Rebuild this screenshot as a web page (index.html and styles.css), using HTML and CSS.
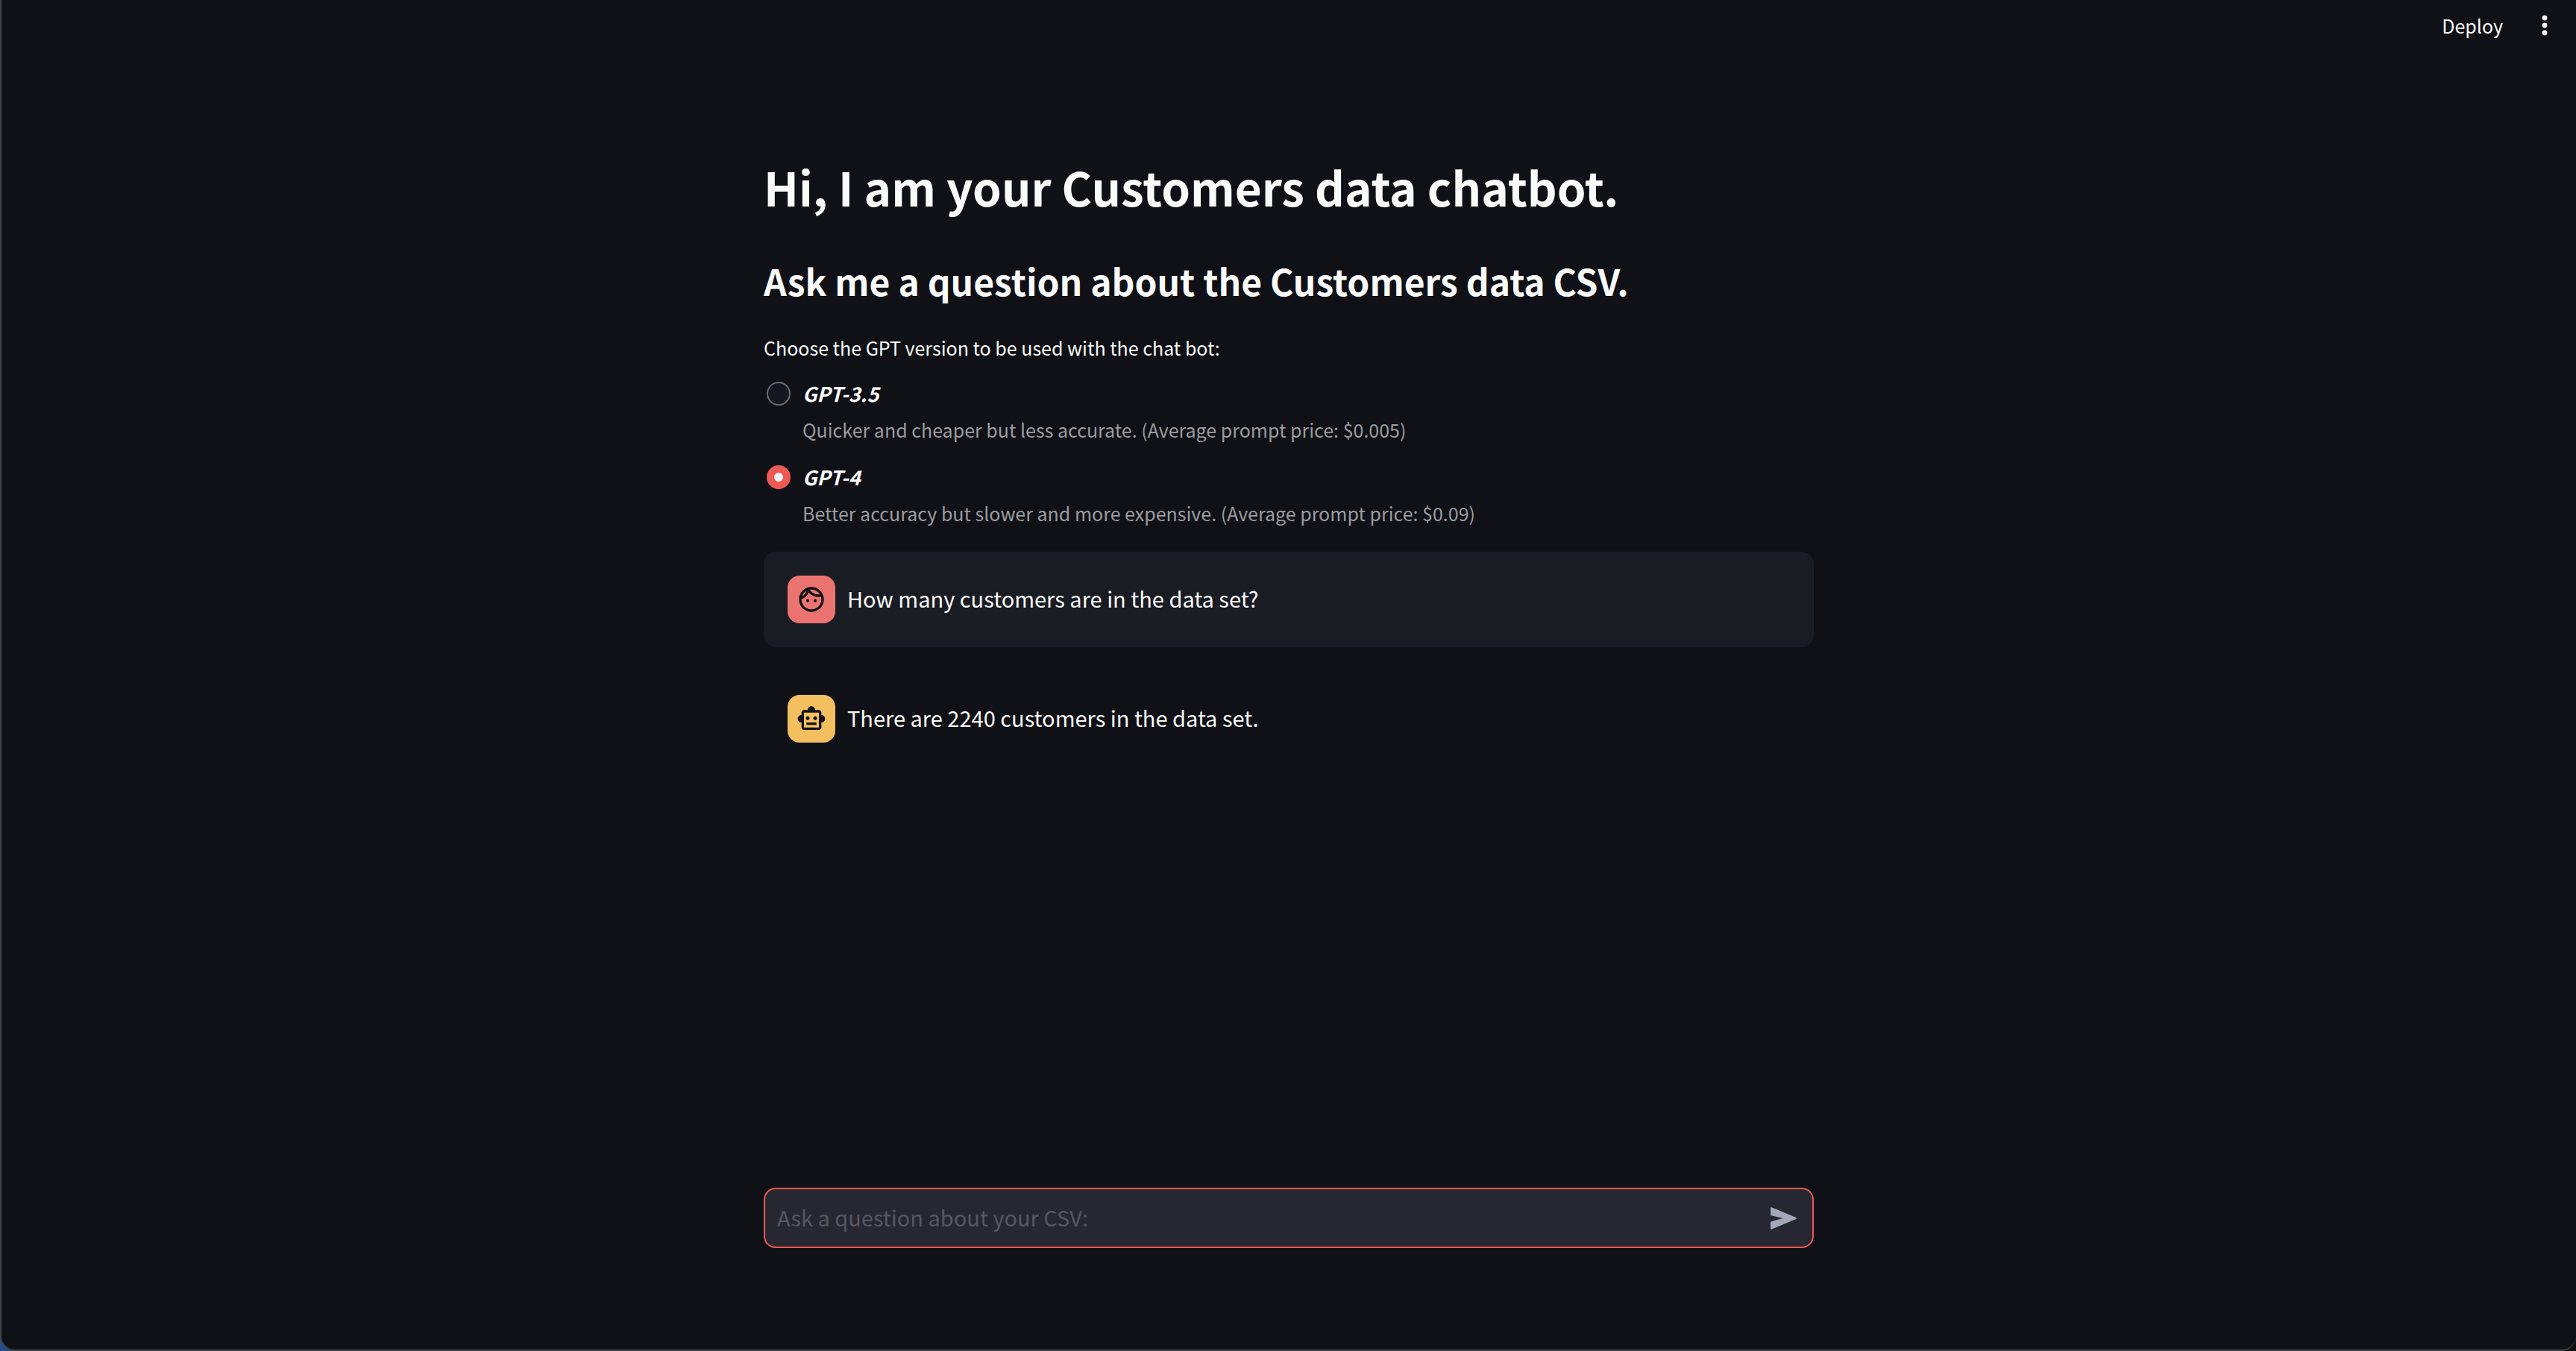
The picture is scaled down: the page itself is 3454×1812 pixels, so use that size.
FILE: index.html
```html
<!DOCTYPE html>
<html lang="en">
<head>
<meta charset="utf-8">
<title>Customers data chatbot</title>
<link rel="stylesheet" href="styles.css">
</head>
<body>
<div class="app">
  <header class="toolbar">
    <button class="deploy" type="button">Deploy</button>
    <button class="menu" type="button" aria-label="Main menu">
      <svg viewBox="0 0 8 28" width="8" height="28" fill="currentColor"><circle cx="4" cy="4" r="3.4"/><circle cx="4" cy="14" r="3.4"/><circle cx="4" cy="24" r="3.4"/></svg>
    </button>
  </header>
  <main class="content">
    <h1 class="title">Hi, I am your Customers data chatbot.</h1>
    <h2 class="subtitle">Ask me a question about the Customers data CSV.</h2>
    <fieldset class="models">
      <legend class="legend">Choose the GPT version to be used with the chat bot:</legend>
      <div class="option">
        <input class="radio" type="radio" name="model" id="gpt35" aria-describedby="gpt35-note">
        <label class="name" for="gpt35">GPT-3.5</label>
        <p class="note" id="gpt35-note">Quicker and cheaper but less accurate. (Average prompt price: $0.005)</p>
      </div>
      <div class="option">
        <input class="radio" type="radio" name="model" id="gpt4" aria-describedby="gpt4-note" checked>
        <label class="name" for="gpt4">GPT-4</label>
        <p class="note" id="gpt4-note">Better accuracy but slower and more expensive. (Average prompt price: $0.09)</p>
      </div>
    </fieldset>
    <section class="chat">
      <article class="message message-user">
        <span class="avatar avatar-user">
          <svg viewBox="0 0 24 24" width="40" height="40" fill="currentColor"><path d="M10.25 13a1.25 1.25 0 1 1-2.5 0 1.25 1.25 0 0 1 2.5 0zM15 11.75a1.25 1.25 0 1 0 0 2.5 1.25 1.25 0 0 0 0-2.5zm7 .25c0 5.52-4.48 10-10 10S2 17.52 2 12 6.48 2 12 2s10 4.48 10 10zM10.66 4.12C12.06 6.44 14.6 8 17.5 8c.46 0 .91-.05 1.34-.12C17.44 5.56 14.9 4 12 4c-.46 0-.91.05-1.34.12zM4.42 9.47a8.046 8.046 0 0 0 3.66-4.44 8.046 8.046 0 0 0-3.66 4.44zM20 12c0-.78-.12-1.53-.33-2.24-.7.15-1.42.24-2.17.24a10 10 0 0 1-7.76-3.69A10.016 10.016 0 0 1 4 11.86c.01.04 0 .09 0 .14 0 4.41 3.59 8 8 8s8-3.59 8-8z"/></svg>
        </span>
        <p class="text">How many customers are in the data set?</p>
      </article>
      <article class="message">
        <span class="avatar avatar-bot">
          <svg viewBox="0 0 24 24" width="40" height="40" fill="currentColor"><path d="M20 9V7c0-1.100-.9-2-2-2h-3c0-1.660-1.340-3-3-3S9 3.340 9 5H6c-1.100 0-2 .9-2 2v2c-1.660 0-3 1.340-3 3s1.340 3 3 3v4c0 1.100.9 2 2 2h12c1.100 0 2-.9 2-2v-4c1.660 0 3-1.340 3-3s-1.340-3-3-3zm-2 10H6V7h12v12zm-9-6c-.83 0-1.500-.67-1.500-1.500S8.170 10 9 10s1.500.67 1.500 1.500S9.830 13 9 13zm7.500-1.500c0 .83-.67 1.500-1.500 1.500s-1.500-.67-1.500-1.500.67-1.500 1.500-1.500 1.500.67 1.500 1.500zM8 15h8v2H8v-2z"/></svg>
        </span>
        <p class="text">There are 2240 customers in the data set.</p>
      </article>
    </section>
  </main>
  <form class="composer">
    <input class="prompt" type="text" placeholder="Ask a question about your CSV:" aria-label="Ask a question about your CSV">
    <button class="send" type="button" aria-label="Send">
      <svg viewBox="0 0 106 90" width="35" height="30" fill="currentColor"><path d="M0 4Q0-1 6 1L102 41Q108 45 102 49L6 89Q0 91 0 86V62Q0 59 3 58L50 45 3 34Q0 33 0 30Z"/></svg>
    </button>
  </form>
</div>
</body>
</html>
```
FILE: styles.css
```css
* {
  box-sizing: border-box;
}

html {
  height: 100%;
}

body {
  margin: 0;
  height: 100%;
  background: linear-gradient(90deg, #24508f 50%, #101010 50%);
  color: #fafafa;
  font-family: "Noto Sans CJK SC", "Noto Sans", sans-serif;
  font-size: 29px;
  line-height: 48px;
}

button,
input {
  font: inherit;
  color: inherit;
}

button {
  display: flex;
  padding: 0;
  border: 0;
  background: none;
}

h1,
h2,
p {
  margin: 0;
}

.app {
  display: flex;
  flex-direction: column;
  min-height: 100%;
  border: 2px solid #414246;
  border-top: 0;
  border-right-width: 0;
  border-radius: 0 0 20px 20px;
  background: #0f1116;
}

.toolbar {
  display: flex;
  align-items: center;
  justify-content: flex-end;
  gap: 52px;
  height: 68px;
  padding-right: 38px;
}

.deploy {
  font-size: 25px;
}

.content {
  flex: 1;
  width: 1408px;
  max-width: 100%;
  margin: 0 auto;
  padding-top: 122px;
}

.title {
  padding: 16px 0 32px;
  font-size: 62px;
  line-height: 88px;
}

.subtitle {
  padding: 16px 0 32px;
  font-size: 48px;
  line-height: 68px;
}

.models {
  display: flex;
  flex-direction: column;
  gap: 16px;
  margin: 0;
  padding: 0;
  border: 0;
}

.legend {
  margin-bottom: 14px;
  padding: 0;
  font-size: 25px;
}

.option {
  display: grid;
  grid-template-columns: 32px 1fr;
  column-gap: 16px;
  align-items: center;
  padding-left: 4px;
}

.radio {
  appearance: none;
  width: 32px;
  height: 32px;
  margin: 0;
  border: 2px solid #6b6c70;
  border-radius: 50%;
  background: #131720;
}

.radio:checked {
  border: 10px solid #ed5a54;
  background: #f0f2f6;
}

.name {
  font-size: 27px;
  font-weight: 700;
  font-style: italic;
}

.note {
  grid-column: 2;
  color: #9b9ca0;
  font-size: 25px;
}

.chat {
  display: flex;
  flex-direction: column;
  gap: 32px;
  margin-top: 28px;
}

.message {
  display: flex;
  align-items: center;
  gap: 16px;
  padding: 32px;
  border-radius: 16px;
}

.message-user {
  background: #1a1c24;
}

.text {
  padding-bottom: 4px;
}

.avatar {
  display: flex;
  align-items: center;
  justify-content: center;
  width: 64px;
  height: 64px;
  border-radius: 16px;
  color: #0f1116;
}

.avatar-user {
  background: #ec7470;
}

.avatar-bot {
  background: #f4bf5f;
}

.composer {
  display: flex;
  align-items: center;
  width: 1408px;
  max-width: 100%;
  height: 81px;
  margin: 0 auto 136px;
  padding: 0 21px 0 16px;
  border: 2px solid #ee5852;
  border-radius: 16px;
  background: #262730;
}

.prompt {
  flex: 1;
  min-width: 0;
  padding: 0 0 4px;
  border: 0;
  outline: 0;
  background: none;
}

.prompt::placeholder {
  color: #565764;
  opacity: 1;
}

.send {
  color: #a3a8b8;
}
```
